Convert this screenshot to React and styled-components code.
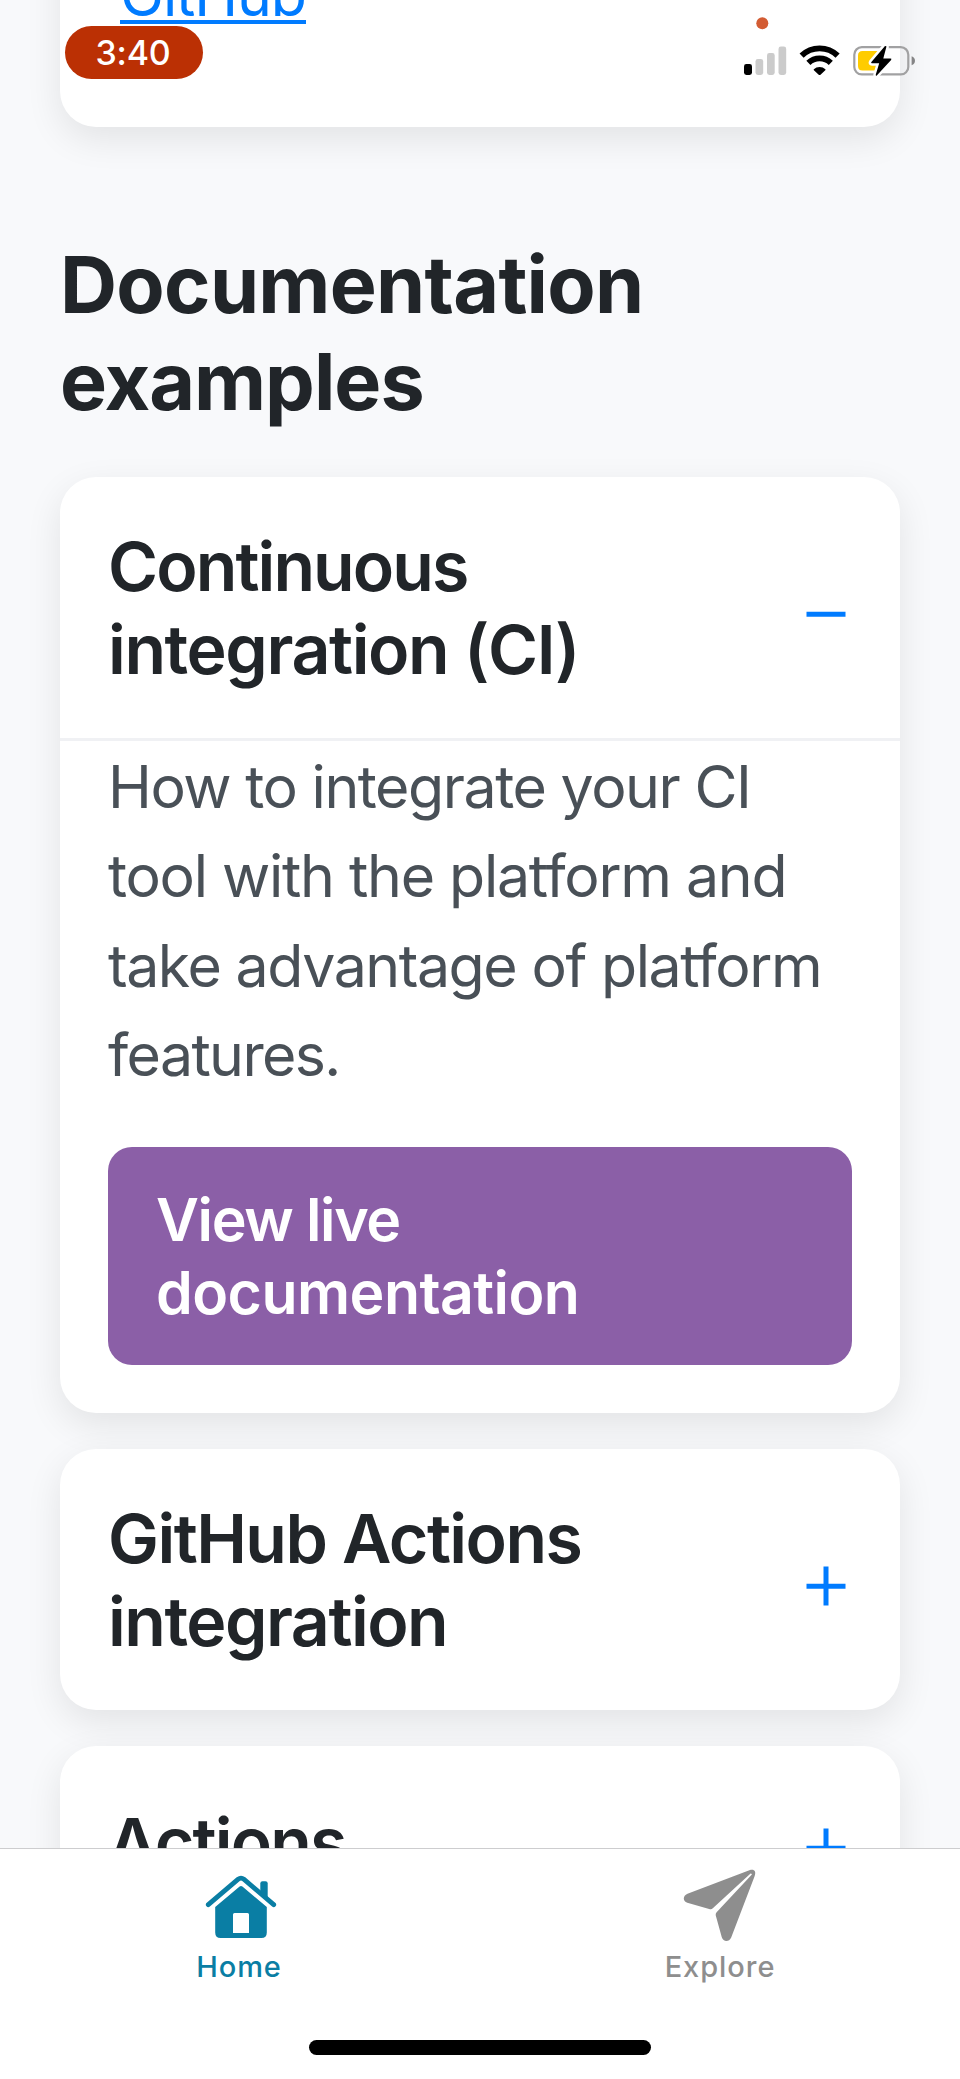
import React from "react";
import styled, { createGlobalStyle } from "styled-components";

const GlobalStyle = createGlobalStyle`
  * { box-sizing: border-box; }
  body { margin: 0; background: #f8f9fb; font-family: Inter, "Liberation Sans", sans-serif; }
  h1, h2, p { margin: 0; }
`;

const Screen = styled.div`
  position: relative;
  display: flex;
  flex-direction: column;
  width: 960px;
  height: 2079px;
  overflow: hidden;
  background: #f8f9fb;
`;

const Scroller = styled.main`
  flex: 1;
  min-height: 0;
  overflow: hidden;
  padding: 0 60px;
`;

const Card = styled.section`
  margin-bottom: 36px;
  border-radius: 36px;
  background: #fff;
  box-shadow: 0 12px 36px rgba(0, 0, 0, 0.09);
`;

const LinkCard = styled(Card)`
  height: 327px;
  margin-top: -200px;
  margin-bottom: 109px;
  padding: 150px 60px 0;
`;

const TextLink = styled.a`
  display: inline-block;
  height: 74px;
  border-bottom: 4px solid #007bff;
  color: #007bff;
  font-size: 59px;
  line-height: 89px;
  letter-spacing: -1.1px;
  white-space: nowrap;
`;

const Line = styled.span`
  display: block;
  letter-spacing: ${(p) => p.$tracking}px;
  white-space: nowrap;
`;

const Title = styled.h1`
  margin-bottom: 47px;
  color: #212529;
  font-size: 79px;
  font-weight: 700;
  line-height: 97px;
`;

const CardHeader = styled.div`
  display: flex;
  align-items: center;
  justify-content: space-between;
  height: ${(p) => (p.$single ? 192 : 261)}px;
  padding: 0 54px 0 48px;
`;

const CardTitle = styled.h2`
  color: #212529;
  font-size: 68px;
  font-weight: 600;
  line-height: 83px;
`;

const ToggleIcon = styled.svg`
  flex: none;
  width: 40px;
  height: 40px;
  margin-top: 12px;
`;

const CardBody = styled.div`
  border-top: 3px solid #f0f1f4;
  padding: 1px 48px 48px;
`;

const Copy = styled.p`
  margin-bottom: 48px;
  color: #495057;
  font-size: 59px;
  line-height: 89.25px;
`;

const Button = styled.a`
  display: block;
  padding: 36px 48px;
  border-radius: 24px;
  background: #8b5fa7;
  color: #fff;
  font-size: 59px;
  font-weight: 600;
  line-height: 73px;
`;

const StatusBar = styled.header`
  position: absolute;
  top: 0;
  left: 0;
  width: 960px;
  height: 100px;
  display: flex;
  justify-content: space-between;
  padding: 0 40px 0 65px;
`;

const Clock = styled.div`
  width: 138px;
  height: 53px;
  margin-top: 26px;
  padding-right: 2px;
  border-radius: 27px;
  background: #bb3004;
  color: #fff;
  font-size: 34px;
  font-weight: 500;
  line-height: 53px;
  letter-spacing: -0.2px;
  text-align: center;
`;

const TabBar = styled.nav`
  flex: none;
  display: grid;
  grid-template-columns: 1fr 1fr;
  grid-template-rows: 1fr 39px;
  height: 231px;
  border-top: 1px solid #cdcdcf;
  background: #fff;
`;

const Tab = styled.a`
  display: flex;
  flex-direction: column;
  align-items: center;
  padding-top: 18px;
  color: ${(p) => (p.$active ? "#0a7ea4" : "#8e8e8e")};
  font-size: 29px;
  font-weight: 500;
  line-height: 36px;
`;

const TabLabel = styled.span`
  letter-spacing: ${(p) => p.$tracking}px;
  margin-right: ${(p) => p.$nudge || 0}px;
`;

const TabIcon = styled.svg`
  width: 80px;
  height: 80px;
  margin-bottom: 2px;
`;

const HomeIndicator = styled.div`
  grid-column: 1 / -1;
  justify-self: center;
  width: 342px;
  height: 15px;
  border-radius: 8px;
  background: #000;
`;

function Toggle({ open }) {
  return (
    <ToggleIcon viewBox="0 0 40 40" stroke="#007bff" strokeWidth="5" fill="none">
      <path d="M.5 20.2h39" />
      {!open && <path d="M20 .5v39" />}
    </ToggleIcon>
  );
}

function StatusIcons() {
  return (
    <svg width="180" height="90" viewBox="740 0 180 90">
      <circle cx="762.3" cy="23.3" r="6" fill="#d35c33" />
      <rect x="744" y="64" width="8" height="11" rx="2.4" fill="#000" />
      <g fill="#cbcbcb">
        <rect x="755.5" y="59" width="7.7" height="16" rx="2.4" />
        <rect x="767" y="53" width="7.7" height="22" rx="2.4" />
        <rect x="778.5" y="46.5" width="7.7" height="28.5" rx="2.4" />
      </g>
      <g fill="none" stroke="#000" strokeWidth="5.9">
        <path d="M801.6 55.6a26 26 0 0 1 36 0" />
        <path d="M808.4 62.9a16.2 16.2 0 0 1 22.4 0" />
      </g>
      <path d="M813.8 69.2a8.5 8.5 0 0 1 11.6 0q.3.5-.1 1l-4.8 4.5q-.9.7-1.8 0l-4.8-4.5q-.4-.5-.1-1z" fill="#000" />
      <rect x="854.3" y="47.2" width="54" height="27.2" rx="7.5" fill="none" stroke="#a1a1a2" strokeWidth="2.2" />
      <path d="M862.5 51h16.5v19.6h-16.5q-4.5 0-4.5-4.5v-10.6q0-4.5 4.5-4.5z" fill="#ffcc00" />
      <path d="M911.6 56.3q3.4 1.2 3.4 4.5t-3.4 4.5z" fill="#858586" />
      <path
        d="M884.8 46.2 871.4 61.9q-.9 1.3.6 1.3h7.2l-3.4 11.4q-.3 1.7 1 .8L891.1 60q1-1.400-.8-1.400h-7l3.100-11.800q.1-1.400-1.600-.6z"
        fill="#000"
        stroke="#fff"
        strokeWidth="5"
        strokeLinejoin="round"
        paintOrder="stroke"
      />
    </svg>
  );
}

function HomeIcon() {
  return (
    <TabIcon viewBox="200 1867 80 80" fill="currentColor">
      <path
        d="M208.3 1904.7 238.2 1879.2q2.8-2.200 5.600 0L273.700 1904.700"
        fill="none"
        stroke="currentColor"
        strokeWidth="4.8"
        strokeLinecap="round"
      />
      <path d="M260.300 1892v-8.500q0-2.200 2.200-2.200h3q2.200 0 2.200 2.200v17z" />
      <path
        fillRule="evenodd"
        d="M215.200 1907 239.600 1886.500q1.400-1.100 2.800 0L266.800 1907v25.500q0 5.500-5.500 5.500h-40.600q-5.500 0-5.500-5.500zM234.500 1913q-1.500 0-1.500 1.500v18.500h16v-18.500q0-1.500-1.500-1.500z"
      />
    </TabIcon>
  );
}

function ExploreIcon() {
  return (
    <TabIcon viewBox="680 1867 80 80" fill="currentColor">
      <path d="M750 1870 687.500 1893.700c-5 2.200-4.800 7.500-.2 9L710 1909.200q1.500.4 2.800-.9L750.300 1873.700q1-.6 1.600.8L716.600 1912.300q-1.200 1.300-.9 3L721.700 1937c1.600 5 7.300 5.300 9.500.4L754.500 1876.500C756.500 1871.500 754.500 1869 750 1870z" />
    </TabIcon>
  );
}

export default function App() {
  return (
    <Screen>
      <GlobalStyle />
      <Scroller>
        <LinkCard>
          <TextLink>GitHub</TextLink>
        </LinkCard>
        <Title>
          <Line $tracking={-0.7}>Documentation</Line>
          <Line $tracking={-1}>examples</Line>
        </Title>
        <Card>
          <CardHeader>
            <CardTitle>
              <Line $tracking={-1.9}>Continuous</Line>
              <Line $tracking={-1.4}>integration (CI)</Line>
            </CardTitle>
            <Toggle open />
          </CardHeader>
          <CardBody>
            <Copy>
              <Line $tracking={-1.45}>How to integrate your CI</Line>
              <Line $tracking={-1.27}>tool with the platform and</Line>
              <Line $tracking={-1.44}>take advantage of platform</Line>
              <Line $tracking={-1.6}>features.</Line>
            </Copy>
            <Button>
              <Line $tracking={-1.35}>View live</Line>
              <Line $tracking={-0.56}>documentation</Line>
            </Button>
          </CardBody>
        </Card>
        <Card>
          <CardHeader>
            <CardTitle>
              <Line $tracking={-1.55}>GitHub Actions</Line>
              <Line $tracking={-1.5}>integration</Line>
            </CardTitle>
            <Toggle />
          </CardHeader>
        </Card>
        <Card>
          <CardHeader $single>
            <CardTitle>
              <Line $tracking={-1.8}>Actions</Line>
            </CardTitle>
            <Toggle />
          </CardHeader>
        </Card>
      </Scroller>
      <TabBar>
        <Tab $active>
          <HomeIcon />
          <TabLabel $tracking={0.95} $nudge={2}>Home</TabLabel>
        </Tab>
        <Tab>
          <ExploreIcon />
          <TabLabel $tracking={0.95}>Explore</TabLabel>
        </Tab>
        <HomeIndicator />
      </TabBar>
      <StatusBar>
        <Clock>3:40</Clock>
        <StatusIcons />
      </StatusBar>
    </Screen>
  );
}
